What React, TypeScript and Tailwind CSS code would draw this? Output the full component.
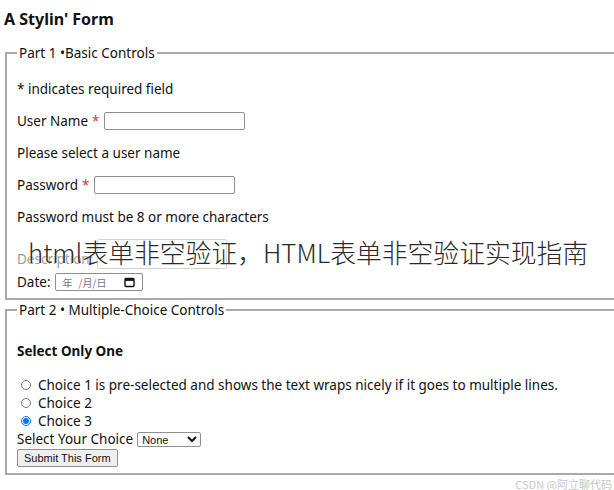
import React from "react";

const sans = "font-['Noto_Sans','Open_Sans',sans-serif]";

function Calendar() {
  return (
    <svg width="11" height="11" viewBox="0 0 11 11" className="shrink-0">
      <rect x="1" y="1.5" width="9" height="8" rx="1" fill="none" stroke="#111" strokeWidth="1.4" />
      <rect x="1" y="1.5" width="9" height="2.4" fill="#111" />
    </svg>
  );
}

export default function App() {
  return (
    <div className={`relative w-[614px] h-[490px] overflow-hidden bg-white text-[#111] ${sans}`}>
      <h1 className="pl-[4px] pt-[8px] text-[16px] font-bold leading-[22px]">A Stylin' Form</h1>

      <form className="w-[660px]">
        <fieldset className="ml-[5px] mt-[13px] border-2 border-[#a9a9a9] pl-[10px] pr-3 pb-[6px]">
          <legend className="px-[2px] text-[13.5px] leading-[20px]">Part 1 •Basic Controls</legend>
          <div className="flex flex-col gap-[12px] pt-[16px] text-[13.5px] leading-[20px]">
            <p>* indicates required field</p>
            <div className="flex items-center h-[20px]">
              <span>User Name</span>
              <span className="ml-[4px] text-[#d33]">*</span>
              <input className="ml-[4px] w-[141px] h-[18px] border border-[#8f8f8f] rounded-[2px]" />
            </div>
            <p>Please select a user name</p>
            <div className="flex items-center h-[20px]">
              <span>Password</span>
              <span className="ml-[4px] text-[#d33]">*</span>
              <input type="password" className="ml-[4px] w-[141px] h-[18px] border border-[#8f8f8f] rounded-[2px]" />
            </div>
            <p>Password must be 8 or more characters</p>
          </div>
          <div className="mt-[12px] flex items-end text-[13.5px] leading-[20px]">
            <span className="text-[#9a9a9a]">Description:</span>
            <div className="ml-[4px] w-[130px] h-[30px] border border-[#d4d4d4] rounded-[2px]" />
          </div>
          <div className="mt-[3px] flex items-center h-[20px] text-[13.5px]">
            <span>Date:</span>
            <div className="ml-[4px] flex items-center w-[88px] h-[18px] border border-[#8f8f8f] rounded-[2px] px-[7px] text-[10px] text-[#777] font-['Noto_Sans_CJK_SC',sans-serif]">
              <span>年</span>
              <span className="ml-[6px]">/</span>
              <span>月</span>
              <span>/</span>
              <span>日</span>
              <span className="ml-auto"><Calendar /></span>
            </div>
          </div>
        </fieldset>

        <fieldset className="ml-[5px] mt-[0px] border-2 border-[#a9a9a9] pl-[10px] pr-3 pb-[6px]">
          <legend className="px-[2px] text-[13.5px] leading-[20px]">Part 2 • Multiple-Choice Controls</legend>
          <p className="mt-[21px] text-[13.5px] font-bold leading-[20px]">Select Only One</p>
          <div className="mt-[15px] flex flex-col text-[13.5px] leading-[18px]">
            <label className="flex items-center h-[18px]">
              <input type="radio" name="c" className="m-0 ml-[4px] mr-[7px] w-[10px] h-[10px]" />
              Choice 1 is pre-selected and shows the text wraps nicely if it goes to multiple lines.
            </label>
            <label className="flex items-center h-[18px]">
              <input type="radio" name="c" className="m-0 ml-[4px] mr-[7px] w-[10px] h-[10px]" />
              Choice 2
            </label>
            <label className="flex items-center h-[18px]">
              <input type="radio" name="c" defaultChecked className="m-0 ml-[4px] mr-[7px] w-[10px] h-[10px]" />
              Choice 3
            </label>
            <div className="flex items-center h-[18px]">
              <span>Select Your Choice</span>
              <select className="ml-[4px] w-[64px] h-[15px] border border-[#8f8f8f] rounded-[2px] bg-white text-[11px] leading-[13px] font-['Liberation_Sans',Arial,sans-serif]">
                <option>None</option>
              </select>
            </div>
          </div>
          <button type="button" className="block mt-[1px] h-[18px] px-[6px] border border-[#8f8f8f] rounded-[2px] bg-[#efefef] text-[11px] leading-[16px] font-['Liberation_Sans',Arial,sans-serif] text-[#111]">
            Submit This Form
          </button>
        </fieldset>
      </form>

      <div className="absolute left-[28px] top-[235px] text-[25.8px] leading-[34px] font-light text-[#2a2a2a] font-['Noto_Sans_CJK_SC',sans-serif] whitespace-nowrap [text-shadow:0_0_3px_#fff]">
        html表单非空验证，HTML表单非空验证实现指南
      </div>
      <div className="absolute right-[2px] top-[477px] text-[11px] leading-[14px] text-[#c8c8c8] font-['Noto_Sans_CJK_SC',sans-serif] whitespace-nowrap">
        CSDN @阿立聊代码
      </div>
    </div>
  );
}
